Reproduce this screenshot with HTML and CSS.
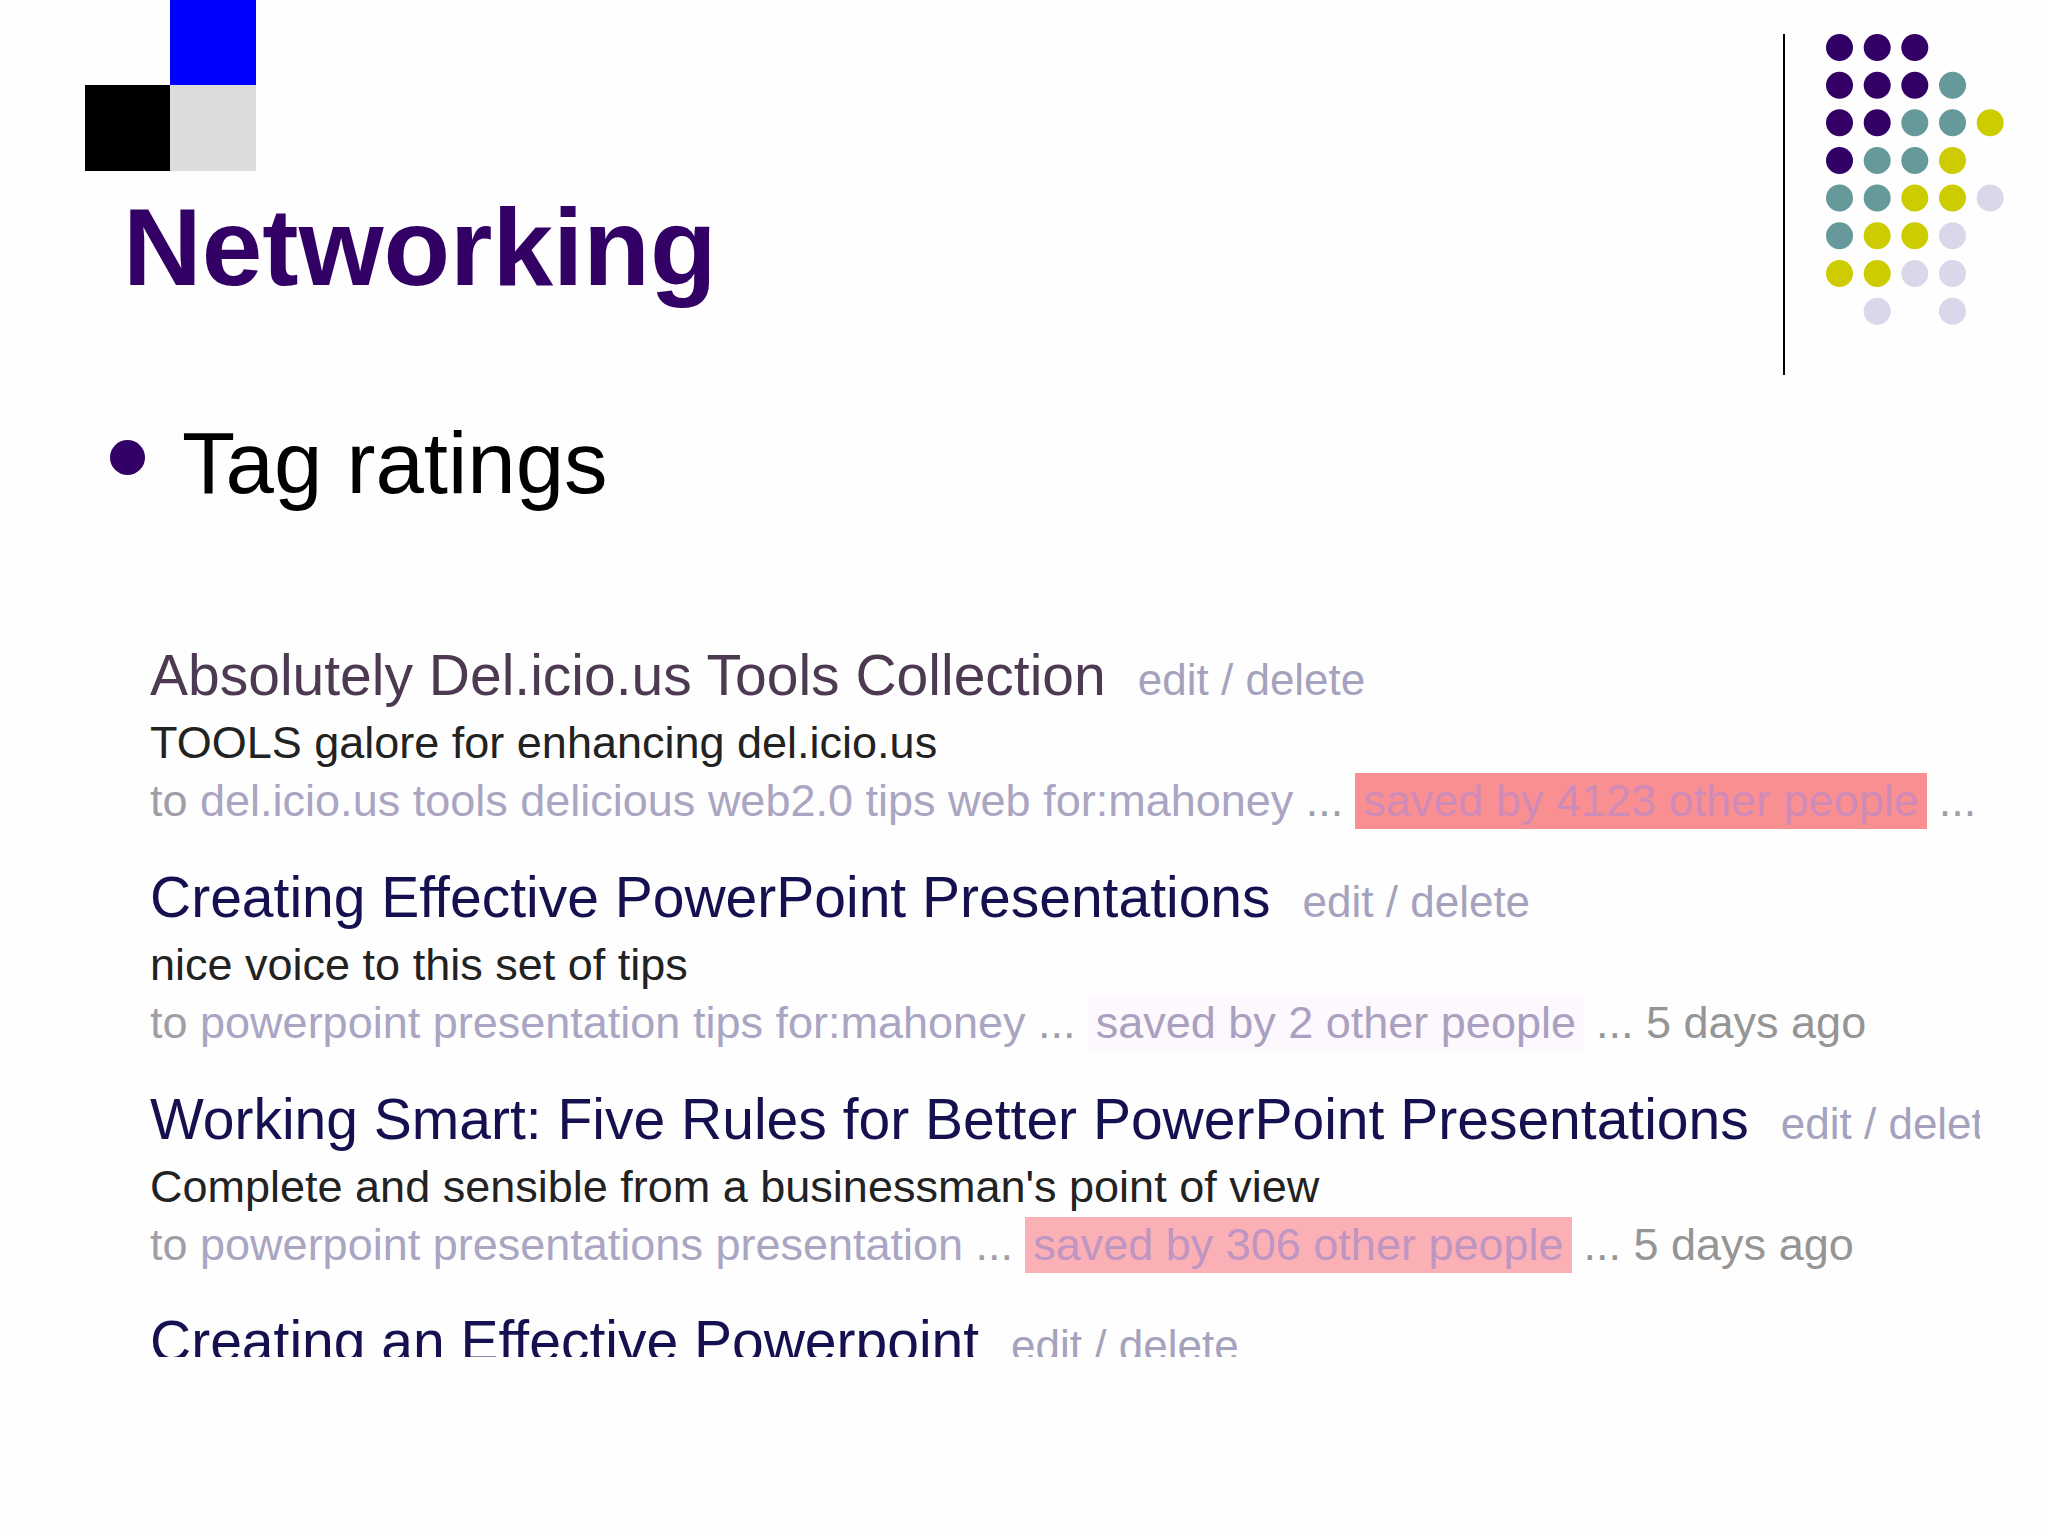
FILE: index.html
```html
<!DOCTYPE html>
<html lang="en">
<head>
    <meta charset="UTF-8">
    <meta name="viewport" content="width=device-width, initial-scale=1.0">
    <title>Networking</title>
    <link rel="stylesheet" href="styles.css">
</head>
<body>
    <header class="header">
        <div class="heading">
            <div class="logo">
                <span class="blue"></span>
                <span class="black"></span>
                <span class="gray"></span>
            </div>
            <h1>Networking</h1>
        </div>
        <div class="dots">
            <svg width="180" height="294" viewBox="0 0 180 294" aria-hidden="true">
                <g fill="#330066">
                    <circle cx="13.5" cy="13.5" r="13.5"/><circle cx="51.2" cy="13.5" r="13.5"/><circle cx="88.8" cy="13.5" r="13.5"/>
                    <circle cx="13.5" cy="51.2" r="13.5"/><circle cx="51.2" cy="51.2" r="13.5"/><circle cx="88.8" cy="51.2" r="13.5"/>
                    <circle cx="13.5" cy="88.8" r="13.5"/><circle cx="51.2" cy="88.8" r="13.5"/>
                    <circle cx="13.5" cy="126.5" r="13.5"/>
                </g>
                <g fill="#669999">
                    <circle cx="126.5" cy="51.2" r="13.5"/>
                    <circle cx="88.8" cy="88.8" r="13.5"/><circle cx="126.5" cy="88.8" r="13.5"/>
                    <circle cx="51.2" cy="126.5" r="13.5"/><circle cx="88.8" cy="126.5" r="13.5"/>
                    <circle cx="13.5" cy="164" r="13.5"/><circle cx="51.2" cy="164" r="13.5"/>
                    <circle cx="13.5" cy="201.8" r="13.5"/>
                </g>
                <g fill="#cccc00">
                    <circle cx="164.2" cy="88.8" r="13.5"/>
                    <circle cx="126.5" cy="126.5" r="13.5"/>
                    <circle cx="88.8" cy="164" r="13.5"/><circle cx="126.5" cy="164" r="13.5"/>
                    <circle cx="51.2" cy="201.8" r="13.5"/><circle cx="88.8" cy="201.8" r="13.5"/>
                    <circle cx="13.5" cy="239.5" r="13.5"/><circle cx="51.2" cy="239.5" r="13.5"/>
                </g>
                <g fill="#dad7eb">
                    <circle cx="164.2" cy="164" r="13.5"/>
                    <circle cx="126.5" cy="201.8" r="13.5"/>
                    <circle cx="88.8" cy="239.5" r="13.5"/><circle cx="126.5" cy="239.5" r="13.5"/>
                    <circle cx="51.2" cy="277.2" r="13.5"/><circle cx="126.5" cy="277.2" r="13.5"/>
                </g>
            </svg>
        </div>
    </header>

    <main>
        <ul class="points">
            <li>Tag ratings</li>
        </ul>

        <section class="posts">
            <article class="post">
                <h2><a class="visited" href="#">Absolutely Del.icio.us Tools Collection</a> <span class="actions"><a href="#">edit</a> / <a href="#">delete</a></span></h2>
                <p class="desc">TOOLS galore for enhancing del.icio.us</p>
                <div class="meta">
                    <span>to <a href="#">del.icio.us</a> <a href="#">tools</a> <a href="#">delicious</a> <a href="#">web2.0</a> <a href="#">tips</a> <a href="#">web</a> <a href="#">for:mahoney</a> ...</span>
                    <a class="saved high" href="#">saved by 4123 other people</a>
                    <span>...</span>
                </div>
            </article>
            <article class="post">
                <h2><a href="#">Creating Effective PowerPoint Presentations</a> <span class="actions"><a href="#">edit</a> / <a href="#">delete</a></span></h2>
                <p class="desc">nice voice to this set of tips</p>
                <div class="meta">
                    <span>to <a href="#">powerpoint</a> <a href="#">presentation</a> <a href="#">tips</a> <a href="#">for:mahoney</a> ...</span>
                    <a class="saved low" href="#">saved by 2 other people</a>
                    <span class="date">... 5 days ago</span>
                </div>
            </article>
            <article class="post">
                <h2><a href="#">Working Smart: Five Rules for Better PowerPoint Presentations</a> <span class="actions"><a href="#">edit</a> / <a href="#">delete</a></span></h2>
                <p class="desc">Complete and sensible from a businessman's point of view</p>
                <div class="meta">
                    <span>to <a href="#">powerpoint</a> <a href="#">presentations</a> <a href="#">presentation</a> ...</span>
                    <a class="saved medium" href="#">saved by 306 other people</a>
                    <span class="date">... 5 days ago</span>
                </div>
            </article>
            <article class="post cut">
                <h2><a href="#">Creating an Effective Powerpoint</a> <span class="actions"><a href="#">edit</a> / <a href="#">delete</a></span></h2>
            </article>
        </section>
    </main>
</body>
</html>
```
FILE: styles.css
```css
body {
    margin: 0;
    background-color: #fefefe;
    font-family: "Liberation Sans", Arial, sans-serif;
    color: #000;
}
a {
    color: inherit;
    text-decoration: none;
}
.header {
    display: flex;
    justify-content: space-between;
    align-items: flex-start;
}
.logo {
    display: grid;
    grid-template-columns: 85px 86px;
    grid-template-rows: 85px 86px;
    margin-left: 85px;
}
.blue {
    grid-column: 2;
    background-color: #0000ff;
}
.black {
    background-color: #000;
}
.gray {
    background-color: #dcdcdc;
}
h1 {
    margin: 16px 0 0 123px;
    font-size: 109px;
    line-height: 120px;
    color: #330066;
}
.dots {
    height: 341px;
    margin: 34px 42px 0 0;
    padding-left: 41px;
    border-left: 2px solid #000;
}
.dots svg {
    display: block;
}
.points {
    margin: 38px 0 0;
    padding: 0 0 0 110px;
    list-style: none;
}
.points li {
    display: flex;
    align-items: center;
    gap: 37px;
    font-size: 87px;
    line-height: 100px;
}
.points li::before {
    content: "";
    width: 35px;
    height: 35px;
    margin-bottom: 12px;
    border-radius: 50%;
    background-color: #330066;
}
.posts {
    margin: 128px 68px 0 120px;
    padding-left: 30px;
    overflow: hidden;
    white-space: nowrap;
}
.post {
    margin-bottom: 34px;
}
.cut {
    height: 50px;
    margin-bottom: 0;
    overflow: hidden;
}
h2 {
    display: flex;
    align-items: baseline;
    gap: 32px;
    margin: 0 0 4px;
    font-size: 57px;
    font-weight: normal;
    line-height: 68px;
    color: #15104f;
}
.visited {
    color: #4d3a52;
}
.actions {
    font-size: 44px;
    line-height: 50px;
    color: #a5a2bd;
}
.desc {
    margin: 0;
    font-size: 45px;
    line-height: 60px;
    color: #222;
}
.meta {
    display: flex;
    gap: 12px;
    font-size: 45px;
    line-height: 56px;
    color: #a09fa8;
}
.meta a {
    color: #a9a5c2;
}
.meta .saved {
    padding: 0 8px;
}
.meta .high {
    background-color: #fa8f92;
    color: #cf8bb8;
}
.meta .medium {
    background-color: #fbb0b6;
    color: #bf95c2;
}
.meta .low {
    background-color: #fcf8fe;
    color: #aaa0c0;
}
.meta .date {
    color: #959595;
}
```
